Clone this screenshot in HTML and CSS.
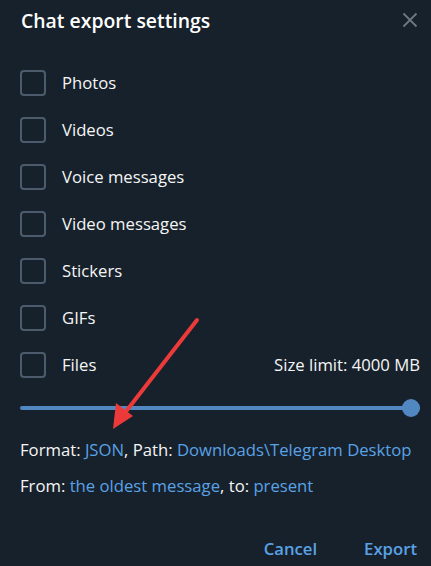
FILE: index.html
```html
<!DOCTYPE html>
<html>
<head>
<meta charset="utf-8">
<link rel="stylesheet" href="styles.css">
</head>
<body>
<div class="dialog">
  <div class="header">
    <div class="title">Chat export settings</div>
    <svg class="close" width="16" height="16" viewBox="0 0 16 16"><path d="M1.5 1.5 L14.5 14.5 M14.5 1.5 L1.5 14.5" stroke="#6d7883" stroke-width="1.8" fill="none"/></svg>
  </div>
  <div class="list">
    <div class="row"><span class="box"></span><span class="label">Photos</span></div>
    <div class="row"><span class="box"></span><span class="label">Videos</span></div>
    <div class="row"><span class="box"></span><span class="label">Voice messages</span></div>
    <div class="row"><span class="box"></span><span class="label">Video messages</span></div>
    <div class="row"><span class="box"></span><span class="label">Stickers</span></div>
    <div class="row"><span class="box"></span><span class="label">GIFs</span></div>
    <div class="row"><span class="box"></span><span class="label">Files</span><span class="limit">Size limit: 4000 MB</span></div>
  </div>
  <div class="slider"><div class="track"></div><div class="thumb"></div></div>
  <div class="info first">Format: <span class="link">JSON</span>, Path: <span class="link">Downloads\Telegram Desktop</span></div>
  <div class="info">From: <span class="link">the oldest message</span>, to: <span class="link">present</span></div>
  <div class="buttons">
    <span class="btn">Cancel</span>
    <span class="btn">Export</span>
  </div>
</div>
<svg class="arrow" width="431" height="566" viewBox="0 0 431 566">
  <line x1="197" y1="320" x2="124" y2="414" stroke="#ec3a3a" stroke-width="4" stroke-linecap="round"/>
  <polygon points="113,429 116,403 133,416" fill="#ec3a3a"/>
</svg>
</body>
</html>
```

FILE: styles.css
```css
html, body {
  margin: 0;
  padding: 0;
  background: #17212b;
}
body {
  width: 431px;
  height: 566px;
  overflow: hidden;
  position: relative;
  font-family: "Open Sans", "Noto Sans", sans-serif;
  color: #f5f5f5;
  font-size: 16.7px;
}
.dialog {
  padding: 0 11px 0 20px;
}
.header {
  height: 40px;
  display: flex;
  align-items: center;
  justify-content: space-between;
  margin-bottom: 19px;
}
.title {
  font-size: 19.4px;
  font-weight: 600;
  color: #ffffff;
  padding-left: 1px;
}
.close {
  margin-right: 2px;
}
.list {
  display: flex;
  flex-direction: column;
}
.row {
  height: 47px;
  display: flex;
  align-items: center;
}
.box {
  width: 22px;
  height: 22px;
  border: 2px solid #4c5c6d;
  border-radius: 4px;
  flex: none;
}
.label {
  margin-left: 16px;
}
.limit {
  margin-left: auto;
}
.slider {
  height: 40px;
  position: relative;
  display: flex;
  align-items: center;
}
.track {
  width: 100%;
  height: 4px;
  border-radius: 2px;
  background: #5288c1;
}
.thumb {
  position: absolute;
  right: 0;
  top: 11px;
  width: 18px;
  height: 18px;
  border-radius: 50%;
  background: #5288c1;
}
.info {
  height: 36px;
  line-height: 36px;
}
.info.first {
  margin-top: 4px;
}
.link {
  color: #5aa2e6;
}
.buttons {
  display: flex;
  justify-content: flex-end;
  gap: 47px;
  margin-top: 33px;
  padding-right: 3px;
}
.btn {
  color: #5aa2e6;
  font-weight: 600;
  font-size: 16.7px;
}
.arrow {
  position: absolute;
  left: 0;
  top: 0;
  pointer-events: none;
}
```
